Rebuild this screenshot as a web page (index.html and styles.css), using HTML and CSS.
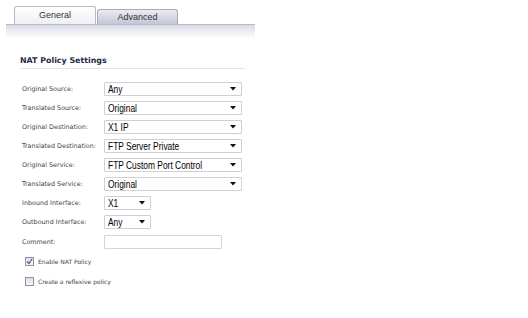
FILE: index.html
```html
<!DOCTYPE html>
<html>
<head>
<meta charset="utf-8">
<link rel="stylesheet" href="styles.css">
</head>
<body>
<div class="tabs">
  <div class="tab active">General</div>
  <div class="tab">Advanced</div>
</div>
<div class="band"></div>
<div class="section">
  <div class="heading">NAT Policy Settings</div>
  <div class="form">
    <div class="row"><span class="label">Original Source:</span><div class="select wide"><span class="val">Any</span><svg class="arrow" width="6" height="4" viewBox="0 0 6 4"><path d="M0 0H6L3 3.5Z" fill="#111"/></svg></div></div>
    <div class="row"><span class="label">Translated Source:</span><div class="select wide"><span class="val">Original</span><svg class="arrow" width="6" height="4" viewBox="0 0 6 4"><path d="M0 0H6L3 3.5Z" fill="#111"/></svg></div></div>
    <div class="row"><span class="label">Original Destination:</span><div class="select wide"><span class="val">X1 IP</span><svg class="arrow" width="6" height="4" viewBox="0 0 6 4"><path d="M0 0H6L3 3.5Z" fill="#111"/></svg></div></div>
    <div class="row"><span class="label">Translated Destination:</span><div class="select wide"><span class="val">FTP Server Private</span><svg class="arrow" width="6" height="4" viewBox="0 0 6 4"><path d="M0 0H6L3 3.5Z" fill="#111"/></svg></div></div>
    <div class="row"><span class="label">Original Service:</span><div class="select wide"><span class="val">FTP Custom Port Control</span><svg class="arrow" width="6" height="4" viewBox="0 0 6 4"><path d="M0 0H6L3 3.5Z" fill="#111"/></svg></div></div>
    <div class="row"><span class="label">Translated Service:</span><div class="select wide"><span class="val">Original</span><svg class="arrow" width="6" height="4" viewBox="0 0 6 4"><path d="M0 0H6L3 3.5Z" fill="#111"/></svg></div></div>
    <div class="row"><span class="label">Inbound Interface:</span><div class="select narrow"><span class="val">X1</span><svg class="arrow" width="6" height="4" viewBox="0 0 6 4"><path d="M0 0H6L3 3.5Z" fill="#111"/></svg></div></div>
    <div class="row"><span class="label">Outbound Interface:</span><div class="select narrow"><span class="val">Any</span><svg class="arrow" width="6" height="4" viewBox="0 0 6 4"><path d="M0 0H6L3 3.5Z" fill="#111"/></svg></div></div>
    <div class="row comment"><span class="label">Comment:</span><div class="input"></div></div>
  </div>
  <div class="checks">
    <div class="check"><span class="box checked"><svg width="7" height="7" viewBox="0 0 7 7"><path d="M1 3.5L3 5.5L6 1" fill="none" stroke="#4a5a8a" stroke-width="1.2"/></svg></span><span class="clabel">Enable NAT Policy</span></div>
    <div class="check"><span class="box"></span><span class="clabel">Create a reflexive policy</span></div>
  </div>
</div>
</body>
</html>
```

FILE: styles.css
```css
html, body {
  margin: 0;
  padding: 0;
  background: #fff;
}
body {
  width: 528px;
  height: 318px;
  font-family: "DejaVu Sans", Verdana, sans-serif;
  color: #333;
}
.tabs {
  display: flex;
  align-items: flex-end;
  padding: 6px 0 0 14px;
  height: 18px;
}
.tab {
  box-sizing: border-box;
  width: 81px;
  height: 15px;
  margin-left: 1px;
  border: 1px solid #a9aab8;
  border-bottom: none;
  border-radius: 3px 3px 0 0;
  background: linear-gradient(#ececf2, #c4c5d6);
  font-family: "Liberation Sans", Arial, sans-serif;
  font-size: 9px;
  color: #333;
  text-align: center;
  line-height: 14px;
}
.tab.active {
  width: 82px;
  height: 18px;
  margin-left: 0;
  border-color: #b9bac6;
  background: linear-gradient(#ffffff, #eeeef4);
  line-height: 17px;
}
.band {
  margin-left: 6px;
  width: 249px;
  height: 14px;
  border-top: 1px solid #b6b8cc;
  box-sizing: border-box;
  background: linear-gradient(#d9dae6, #ffffff);
}
.section {
  padding: 18px 0 0 20px;
}
.heading {
  width: 225px;
  font-weight: bold;
  font-size: 7.9px;
  color: #1e2a4a;
  line-height: 10px;
  padding-bottom: 2px;
  border-bottom: 1px solid #e4e4e8;
}
.form {
  display: flex;
  flex-direction: column;
  padding: 13px 0 0 2px;
  gap: 5px;
}
.row {
  display: flex;
  align-items: center;
  height: 14px;
}
.row.comment {
  margin-top: 1px;
}
.label {
  width: 82px;
  font-size: 6.4px;
  color: #444;
}
.select {
  box-sizing: border-box;
  height: 14px;
  border: 1px solid #cfd0d4;
  border-radius: 1px;
  background: #fff;
  display: flex;
  align-items: center;
  justify-content: space-between;
  padding: 0 5px 0 3px;
  font-family: "Liberation Sans", Arial, sans-serif;
  font-size: 10.5px;
  color: #000;
  white-space: nowrap;
}
.val {
  display: inline-block;
  transform: scaleX(0.8);
  transform-origin: left center;
}
.select.wide {
  width: 138px;
}
.select.narrow {
  width: 47px;
}
.arrow {
  flex: none;
}
.input {
  box-sizing: border-box;
  width: 118px;
  height: 14px;
  border: 1px solid #d4d5da;
  border-radius: 1px;
  background: #fff;
}
.checks {
  display: flex;
  flex-direction: column;
  gap: 11px;
  padding: 8px 0 0 5px;
}
.check {
  display: flex;
  align-items: center;
  height: 9px;
}
.box {
  box-sizing: border-box;
  width: 9px;
  height: 9px;
  border: 1px solid #8f93a3;
  background: linear-gradient(#dcdde4, #f6f6f8);
  display: flex;
  align-items: center;
  justify-content: center;
}
.clabel {
  margin-left: 4px;
  font-size: 6px;
  color: #444;
}
```
